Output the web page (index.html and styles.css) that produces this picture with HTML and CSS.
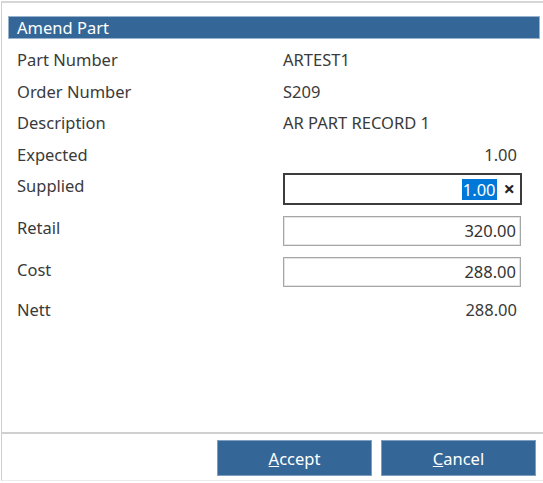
FILE: index.html
```html
<!DOCTYPE html>
<html>
<head>
<meta charset="utf-8">
<link rel="stylesheet" href="styles.css">
</head>
<body>
<div class="dialog">
  <div class="title">Amend Part</div>
  <div class="form">
    <div class="row"><span class="label">Part Number</span><span class="value">ARTEST1</span></div>
    <div class="row"><span class="label">Order Number</span><span class="value">S209</span></div>
    <div class="row"><span class="label">Description</span><span class="value">AR PART RECORD 1</span></div>
    <div class="row row-short"><span class="label">Expected</span><span class="value num">1.00</span></div>
    <div class="row row-field"><span class="label">Supplied</span>
      <div class="input focused"><span class="sel">1.00</span><span class="clear">×</span></div>
    </div>
    <div class="row row-field"><span class="label">Retail</span>
      <div class="input">320.00</div>
    </div>
    <div class="row row-field row-cost"><span class="label">Cost</span>
      <div class="input">288.00</div>
    </div>
    <div class="row"><span class="label">Nett</span><span class="value num">288.00</span></div>
  </div>
  <div class="footer">
    <button class="btn"><u>A</u>ccept</button>
    <button class="btn"><u>C</u>ancel</button>
  </div>
</div>
</body>
</html>
```

FILE: styles.css
```css
html, body {
  margin: 0;
  padding: 0;
  background: #ffffff;
}
body {
  font-family: "Noto Sans", "Open Sans", sans-serif;
  font-size: 16.5px;
  color: #3a3a3a;
}
.dialog {
  margin-top: 1px;
  margin-left: 1px;
  height: 480px;
  border-top: 2px solid #d6d6d6;
  border-left: 1px solid #cfcfcf;
  border-bottom: 1px solid #ececec;
  display: flex;
  flex-direction: column;
  box-sizing: border-box;
}
.title {
  margin: 14px 4px 0 7px;
  height: 21px;
  line-height: 21px;
  background: #346797;
  color: #ffffff;
  padding-left: 8px;
  font-size: 16.5px;
  box-shadow: 0 0 0 1px #9ab3cc;
}
.form {
  padding-top: 12px;
  padding-left: 15px;
  flex: 1;
}
.row {
  display: grid;
  grid-template-columns: 266px 238px;
  height: 31.7px;
  line-height: 20px;
  align-items: start;
}
.row-short {
  height: 29px;
}
.row-field {
  height: 42px;
}
.row-cost .input {
  margin-top: -1px;
}
.row-field .label {
  padding-top: 2px;
}
.value.num {
  text-align: right;
  padding-right: 4px;
}
.input {
  height: 30px;
  box-sizing: border-box;
  border: 1px solid #a6a6a6;
  box-shadow: inset 0 0 0 1px #e4e4e4;
  text-align: right;
  padding-right: 4px;
  line-height: 27px;
  color: #333;
}
.input.focused {
  height: 32px;
  margin: -1px 0 0 0;
  width: 239px;
  border: 2px solid #3c3c3c;
  box-shadow: none;
  display: flex;
  justify-content: flex-end;
  align-items: center;
  padding-right: 5px;
}
.sel {
  background: #0078d7;
  color: #ffffff;
  line-height: 21px;
  padding: 0 1px;
}
.clear {
  margin-left: 7px;
  font-weight: bold;
  color: #222;
  font-size: 20px;
  line-height: 20px;
}
.footer {
  border-top: 2px solid #d0d0d0;
  height: 48px;
  display: flex;
  justify-content: flex-end;
  align-items: flex-start;
  gap: 9px;
  padding: 6px 7px 0 0;
  box-sizing: border-box;
}
.btn {
  width: 155px;
  height: 36px;
  background: #346797;
  border: 1px solid #7d9fc2;
  color: #ffffff;
  font-family: "Noto Sans", "Open Sans", sans-serif;
  font-size: 16.5px;
  padding: 0;
}
```
